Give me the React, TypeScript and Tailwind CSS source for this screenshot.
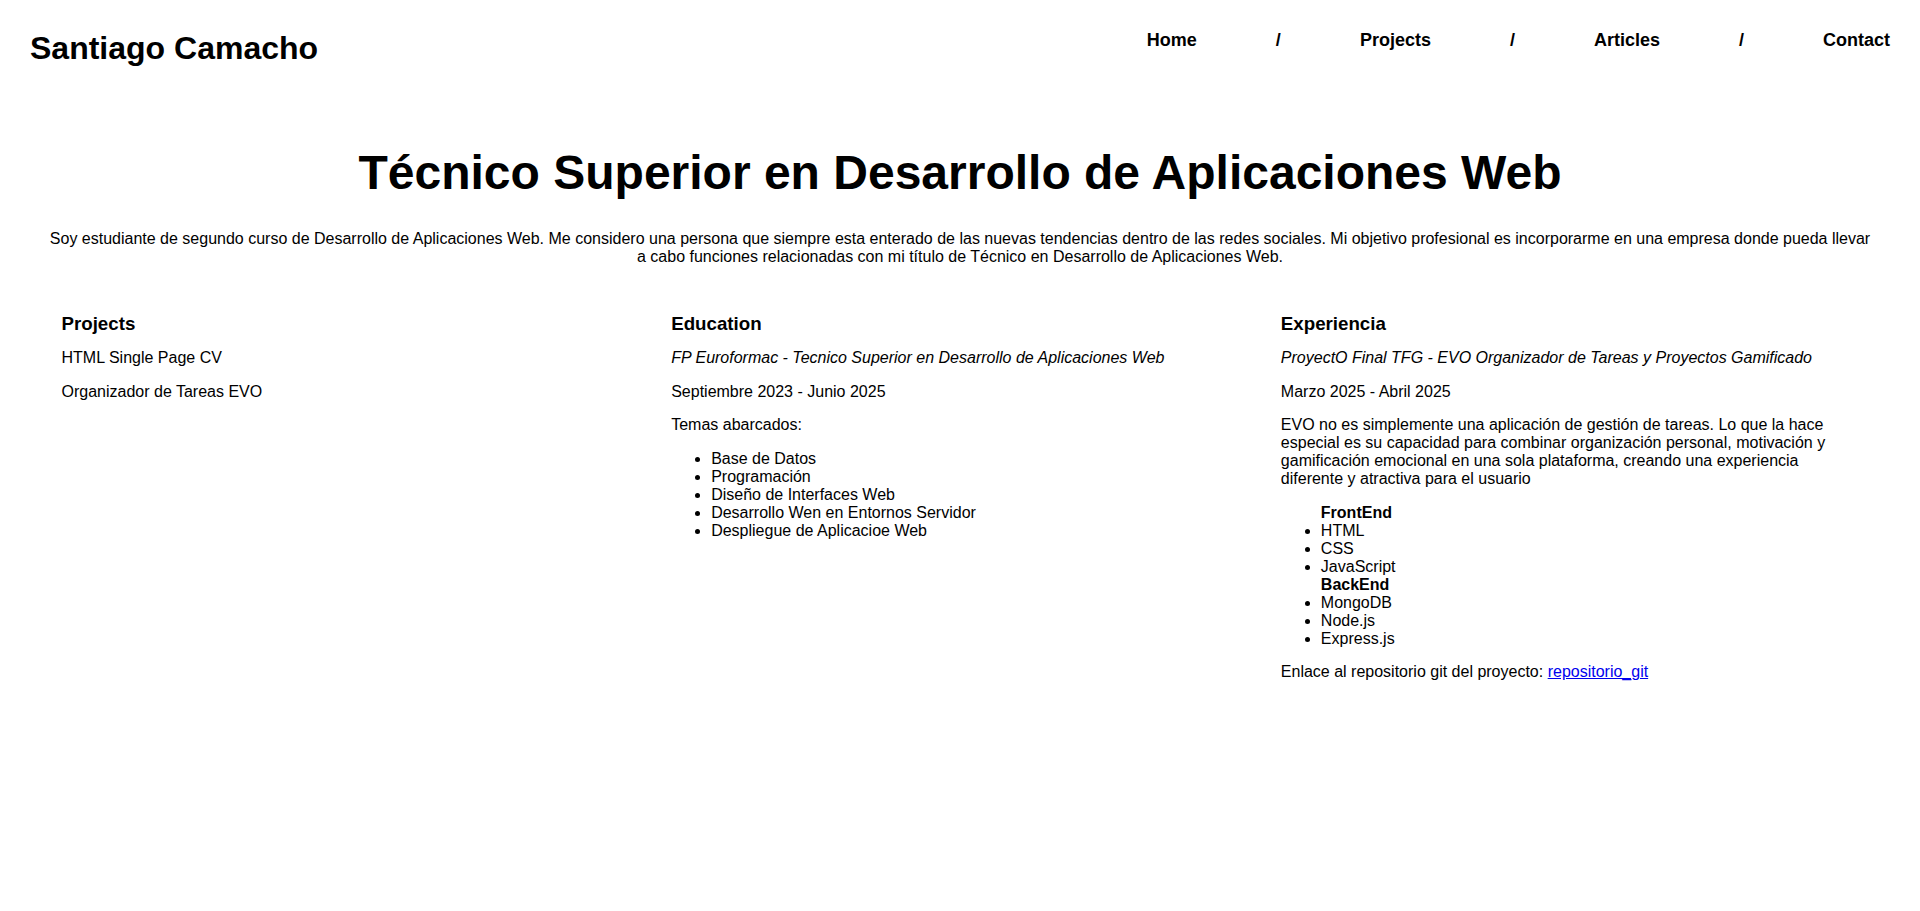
import React from "react";

const navItems = ["Home", "/", "Projects", "/", "Articles", "/", "Contact"];

export default function App() {
  return (
    <div
      className="min-h-[911px] bg-white text-black"
      style={{ fontFamily: '"Liberation Sans", Arial, sans-serif' }}
    >
      <header className="flex items-start justify-between px-[30px] pt-[30px]">
        <h1 className="text-[32px] font-bold leading-[36px]">Santiago Camacho</h1>
        <nav>
          <ul className="flex gap-[79px] text-[18px] font-bold leading-[20px]">
            {navItems.map((item, i) => (
              <li key={i}>{item}</li>
            ))}
          </ul>
        </nav>
      </header>

      <main className="px-[45.5px]">
        <section className="text-center">
          <h2 className="mt-[80px] text-[48px] font-bold leading-[54px]">
            Técnico Superior en Desarrollo de Aplicaciones Web
          </h2>
          <p className="mt-[30px] text-[16px] leading-[18px]">
            Soy estudiante de segundo curso de Desarrollo de Aplicaciones Web. Me considero una persona que siempre esta enterado de las nuevas tendencias dentro de las redes sociales. Mi objetivo profesional es incorporarme en una empresa donde pueda llevar a cabo funciones relacionadas con mi título de Técnico en Desarrollo de Aplicaciones Web.
          </p>
        </section>

        <section className="mt-[47px] grid grid-cols-3 text-[16px] leading-[18px]">
          <div className="px-4">
            <h3 className="text-[18.72px] font-bold leading-[21px]">Projects</h3>
            <p className="mt-[15px]">HTML Single Page CV</p>
            <p className="mt-[15.5px]">Organizador de Tareas EVO</p>
          </div>

          <div className="px-4">
            <h3 className="text-[18.72px] font-bold leading-[21px]">Education</h3>
            <p className="mt-[15px] italic">
              FP Euroformac - Tecnico Superior en Desarrollo de Aplicaciones Web
            </p>
            <p className="mt-[15.5px]">Septiembre 2023 - Junio 2025</p>
            <p className="mt-[15.5px]">Temas abarcados:</p>
            <ul className="mt-[15.5px] list-disc pl-[40px]">
              <li>Base de Datos</li>
              <li>Programación</li>
              <li>Diseño de Interfaces Web</li>
              <li>Desarrollo Wen en Entornos Servidor</li>
              <li>Despliegue de Aplicacioe Web</li>
            </ul>
          </div>

          <div className="px-4">
            <h3 className="text-[18.72px] font-bold leading-[21px]">Experiencia</h3>
            <p className="mt-[15px] italic">
              ProyectO Final TFG - EVO Organizador de Tareas y Proyectos Gamificado
            </p>
            <p className="mt-[15.5px]">Marzo 2025 - Abril 2025</p>
            <p className="mt-[15.5px]">
              EVO no es simplemente una aplicación de gestión de tareas. Lo que la hace especial es su capacidad para combinar organización personal, motivación y gamificación emocional en una sola plataforma, creando una experiencia diferente y atractiva para el usuario
            </p>
            <ul className="mt-[15.5px] list-disc pl-[40px]">
              <li className="list-none font-bold">FrontEnd</li>
              <li>HTML</li>
              <li>CSS</li>
              <li>JavaScript</li>
              <li className="list-none font-bold">BackEnd</li>
              <li>MongoDB</li>
              <li>Node.js</li>
              <li>Express.js</li>
            </ul>
            <p className="mt-[15.5px]">
              Enlace al repositorio git del proyecto:{" "}
              <a href="#" className="text-[#0000ee] underline">
                repositorio_git
              </a>
            </p>
          </div>
        </section>
      </main>
    </div>
  );
}
